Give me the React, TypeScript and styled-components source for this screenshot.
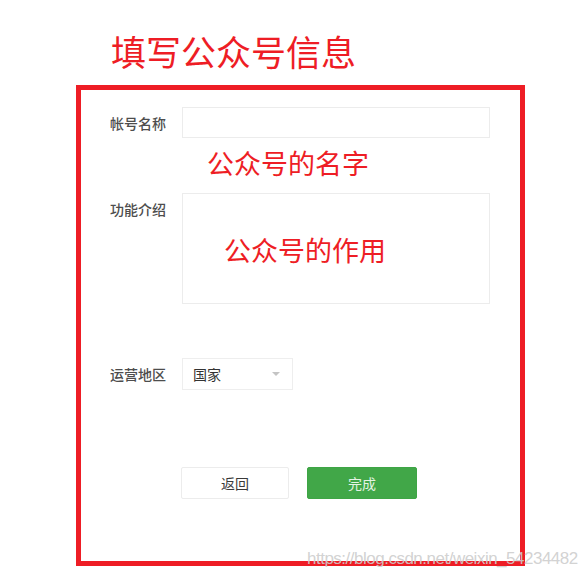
import React from 'react';
import styled, { createGlobalStyle } from 'styled-components';

const red = '#ee1d25';

const GlobalStyle = createGlobalStyle`
  html, body {
    margin: 0;
    padding: 0;
    background: #ffffff;
  }
  body {
    font-family: "Noto Sans CJK SC", "Noto Sans", sans-serif;
  }
`;

export default function App() {
  return (
    <Page>
      <GlobalStyle />
      <Title>填写公众号信息</Title>
      <Box>
        <Row $align="center">
          <Label>帐号名称</Label>
          <Input />
        </Row>
        <Hint $indent={97}>公众号的名字</Hint>
        <Row $align="flex-start" $gap={17}>
          <Label $tall>功能介绍</Label>
          <TextArea>
            <Hint $indent={0}>公众号的作用</Hint>
          </TextArea>
        </Row>
        <Row $align="center" $gap={54}>
          <Label>运营地区</Label>
          <Select>
            <span>国家</span>
            <Caret />
          </Select>
        </Row>
        <Buttons>
          <Button>返回</Button>
          <Button $primary>完成</Button>
        </Buttons>
      </Box>
      <Watermark>https://blog.csdn.net/weixin_54234482</Watermark>
    </Page>
  );
}

const Page = styled.div`
  position: relative;
  width: 588px;
  height: 577px;
  overflow: hidden;
  padding-top: 33px;
  box-sizing: border-box;
`;

const Title = styled.div`
  margin-left: 111px;
  font-size: 35px;
  line-height: 35px;
  color: ${red};
`;

const Box = styled.div`
  margin-top: 17px;
  margin-left: 76px;
  width: 449px;
  height: 481px;
  box-sizing: border-box;
  border: 5px solid ${red};
  padding: 17px 0 0 29px;
  display: flex;
  flex-direction: column;
`;

type RowProps = { $align: string; $gap?: number };
const Row = styled.div<RowProps>`
  display: flex;
  align-items: ${({ $align }) => $align};
  margin-top: ${({ $gap }) => ($gap ? $gap + 'px' : '0')};
`;

type LabelProps = { $tall?: boolean };
const Label = styled.div<LabelProps>`
  width: 72px;
  flex-shrink: 0;
  font-size: 14px;
  font-weight: 500;
  line-height: ${({ $tall }) => ($tall ? '33px' : '20px')};
  color: #4d4d4d;
`;

const Input = styled.div`
  width: 308px;
  height: 31px;
  box-sizing: border-box;
  border: 1px solid #ececec;
  background: #ffffff;
`;

type HintProps = { $indent: number };
const Hint = styled.div<HintProps>`
  margin-top: ${({ $indent }) => ($indent ? '11px' : '0')};
  margin-left: ${({ $indent }) => $indent + 'px'};
  font-size: 27px;
  line-height: 27px;
  color: ${red};
`;

const TextArea = styled.div`
  width: 308px;
  height: 111px;
  box-sizing: border-box;
  border: 1px solid #ececec;
  padding: 42px 0 0 41px;
`;

const Select = styled.div`
  width: 111px;
  height: 32px;
  box-sizing: border-box;
  border: 1px solid #eeeeee;
  display: flex;
  align-items: center;
  justify-content: space-between;
  padding: 0 12px 0 10px;
  font-size: 14px;
  color: #333333;
`;

const Caret = styled.span`
  width: 0;
  height: 0;
  border-left: 4px solid transparent;
  border-right: 4px solid transparent;
  border-top: 4px solid #c4c4c4;
`;

const Buttons = styled.div`
  display: flex;
  gap: 18px;
  margin-top: 77px;
  margin-left: 71px;
`;

type ButtonProps = { $primary?: boolean };
const Button = styled.div<ButtonProps>`
  width: ${({ $primary }) => ($primary ? '110px' : '108px')};
  height: 32px;
  box-sizing: border-box;
  border: 1px solid ${({ $primary }) => ($primary ? '#3ea545' : '#ececec')};
  border-radius: 2px;
  background: ${({ $primary }) => ($primary ? '#41a748' : '#ffffff')};
  color: ${({ $primary }) => ($primary ? '#e4f3e4' : '#3a3a3a')};
  font-size: 14px;
  display: flex;
  align-items: center;
  justify-content: center;
`;

const Watermark = styled.div`
  position: absolute;
  left: 307px;
  top: 549px;
  font-family: "Liberation Sans", Arial, sans-serif;
  font-size: 17px;
  line-height: 20px;
  letter-spacing: -0.5px;
  color: rgba(205, 205, 205, 0.9);
  white-space: nowrap;
`;
